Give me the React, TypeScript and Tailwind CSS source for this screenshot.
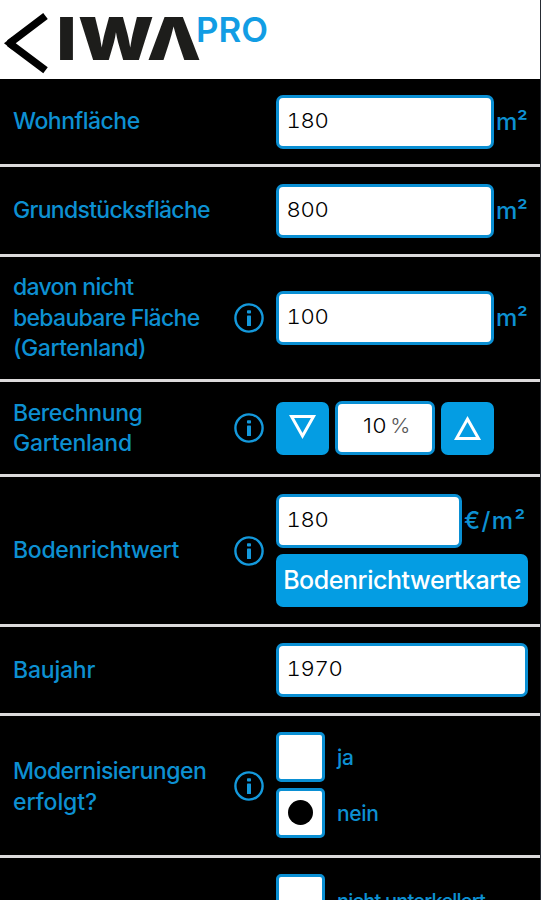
import { useState } from 'react';
import type { ReactNode } from 'react';

const boxClass = 'h-[54px] rounded-[7px] border-[3px] border-[#0a8fd3] bg-white';

function InfoIcon() {
  return (
    <svg width="30" height="30" viewBox="0 0 30 30" fill="none">
      <circle cx="15" cy="15" r="13.6" stroke="#1499dc" strokeWidth="2.4" />
      <rect x="13" y="7.2" width="4" height="3.4" rx="0.8" fill="#1499dc" />
      <rect x="13" y="12.6" width="4" height="10.4" rx="0.6" fill="#1499dc" />
    </svg>
  );
}

function Row({ label, info, height, children }: { label: ReactNode; info?: boolean; height: string; children: ReactNode }) {
  return (
    <section className={`flex shrink-0 items-center border-b-[3px] border-[#dcdadb] ${height}`}>
      <div className="w-[234px] pl-[13px] text-[23px] leading-[30.5px] whitespace-nowrap">{label}</div>
      <div className="w-[42px]">{info && <InfoIcon />}</div>
      <div className="w-[252px]">{children}</div>
    </section>
  );
}

function Field({ value, onChange, unit, width }: { value: string; onChange: (v: string) => void; unit?: ReactNode; width: string }) {
  return (
    <div className="flex items-center">
      <div className={`${boxClass} ${width}`}>
        <input
          value={value}
          onChange={e => onChange(e.target.value)}
          className="h-full w-[80%] origin-left scale-x-[1.08] bg-transparent pb-[3px] pl-[7px] text-[20.5px] font-light tracking-[-0.3px] text-black tabular-nums outline-none"
        />
      </div>
      {unit && <span className="ml-[2px] text-[24px] leading-none whitespace-nowrap">{unit}</span>}
    </div>
  );
}

function Option({ label, checked, onSelect }: { label: ReactNode; checked?: boolean; onSelect?: () => void }) {
  return (
    <button type="button" onClick={onSelect} className="flex items-center">
      <span className="flex h-[50px] w-[49px] items-center justify-center rounded-[5px] border-[3px] border-[#0a8fd3] bg-white">
        {checked && <span className="size-[25px] rounded-full bg-black" />}
      </span>
      <span className="ml-[12px] pt-[2px] text-[21px] leading-none tracking-[-0.3px]">{label}</span>
    </button>
  );
}

function Logo() {
  return (
    <svg width="270" height="79" viewBox="0 0 270 79">
      <path d="M45.5 16 9.5 43.3l36 27" fill="none" stroke="#000" strokeWidth="7.5" strokeMiterlimit="1.5" />
      <path d="M4 43.3 12 37v12.6Z" />
      <g fontFamily="Inter, sans-serif" fontWeight="900" fontSize="59" fill="#1d1d1b">
        <text x="57" y="60" textLength="19" lengthAdjust="spacingAndGlyphs">I</text>
        <text x="78" y="60" textLength="76" lengthAdjust="spacingAndGlyphs">W</text>
        <text x="147" y="60" textLength="54" lengthAdjust="spacingAndGlyphs">Λ</text>
      </g>
      <text x="196" y="42" fontFamily="Inter, sans-serif" fontWeight="600" fontSize="34" fill="#129de4" textLength="72" lengthAdjust="spacingAndGlyphs">PRO</text>
    </svg>
  );
}

export default function App() {
  const [living, setLiving] = useState('180');
  const [plot, setPlot] = useState('800');
  const [garden, setGarden] = useState('100');
  const [percent, setPercent] = useState(10);
  const [landValue, setLandValue] = useState('180');
  const [year, setYear] = useState('1970');
  const [modernised, setModernised] = useState(false);

  const squareMetres = <span className="tracking-[-0.4px]">m²</span>;

  return (
    <div className="flex h-[900px] w-[541px] flex-col overflow-hidden border-r border-[#262b33] bg-black font-['Inter',sans-serif] font-[450] text-[#0d90d2]">
      <header className="h-[79px] shrink-0 bg-white">
        <Logo />
      </header>

      <Row label={<span className="tracking-[-0.5px]">Wohnfläche</span>} height="h-[88px]">
        <Field value={living} onChange={setLiving} unit={squareMetres} width="w-[218px]" />
      </Row>

      <Row label={<span className="tracking-[-0.7px]">Grundstücksfläche</span>} height="h-[90px]">
        <Field value={plot} onChange={setPlot} unit={squareMetres} width="w-[218px]" />
      </Row>

      <Row
        label={
          <>
            <div className="tracking-[-0.7px]">davon nicht</div>
            <div className="tracking-[-0.7px]">bebaubare Fläche</div>
            <div className="tracking-[-0.45px]">(Gartenland)</div>
          </>
        }
        info
        height="h-[125px]"
      >
        <Field value={garden} onChange={setGarden} unit={squareMetres} width="w-[218px]" />
      </Row>

      <Row
        label={
          <>
            <div className="tracking-[-0.4px]">Berechnung</div>
            <div className="tracking-[-0.25px]">Gartenland</div>
          </>
        }
        info
        height="h-[95px]"
      >
        <div className="flex items-center gap-[6px]">
          <button type="button" onClick={() => setPercent(percent - 1)} className="flex h-[53px] w-[53px] items-center justify-center rounded-[7px] bg-[#049de3]">
            <svg width="28" height="28" viewBox="0 0 28 28" fill="none" stroke="#fff" strokeWidth="3">
              <path d="M2.5 2.5h22L13.5 22Z" />
            </svg>
          </button>
          <div className={`${boxClass} w-[100px] pb-[3px]`}>
            <div className="flex h-full scale-x-[1.1] items-center justify-center gap-[3px] pl-[2px] text-[20.5px] font-light text-black">
              <span className="tracking-[0.5px]">{percent}</span>
              <span className="text-[19.5px] tracking-[-1px] text-[#555]">%</span>
            </div>
          </div>
          <button type="button" onClick={() => setPercent(percent + 1)} className="flex h-[53px] w-[53px] items-center justify-center rounded-[7px] bg-[#049de3]">
            <svg width="28" height="28" viewBox="0 0 28 28" fill="none" stroke="#fff" strokeWidth="3">
              <path d="M2.5 24.5h22L13.5 5Z" />
            </svg>
          </button>
        </div>
      </Row>

      <Row label={<span className="tracking-[-0.3px]">Bodenrichtwert</span>} info height="h-[150px]">
        <Field value={landValue} onChange={setLandValue} unit={<span className="tracking-[1.4px]">€/m²</span>} width="w-[186px]" />
        <button type="button" className="mt-[6px] flex h-[53px] w-[252px] items-center justify-center rounded-[7px] bg-[#049de3] text-[25px] tracking-[-0.45px] text-white">
          Bodenrichtwertkarte
        </button>
      </Row>

      <Row label={<span className="tracking-[-0.2px]">Baujahr</span>} height="h-[89px]">
        <Field value={year} onChange={setYear} width="w-[252px]" />
      </Row>

      <Row
        label={
          <div className="pt-[2px]">
            <div className="tracking-[-0.5px]">Modernisierungen</div>
            <div className="tracking-[-0.1px]">erfolgt?</div>
          </div>
        }
        info
        height="h-[142px]"
      >
        <div className="flex flex-col gap-[6px] pb-[2px]">
          <Option label="ja" checked={modernised} onSelect={() => setModernised(true)} />
          <Option label="nein" checked={!modernised} onSelect={() => setModernised(false)} />
        </div>
      </Row>

      <section className="shrink-0 pt-4 pl-[276px]">
        <Option label={<span className="text-[20px] tracking-[-0.8px]">nicht unterkellert</span>} />
      </section>
    </div>
  );
}
